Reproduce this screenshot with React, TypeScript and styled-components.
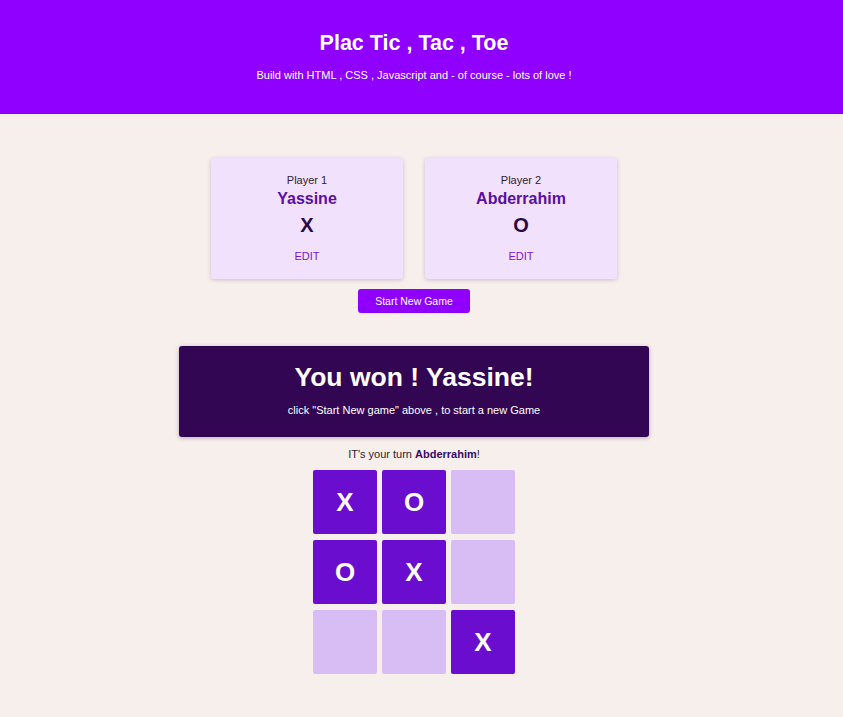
import styled, { createGlobalStyle } from 'styled-components';

type Player = { label: string, name: string, symbol: string }

const GlobalStyle = createGlobalStyle`
  body {
    margin: 0;
    background: #f7efec;
    font-family: "Liberation Sans", Arial, sans-serif;
  }
`

const Header = styled.header`
  background: #8f00ff;
  color: #fff;
  text-align: center;
  padding: 30px 15px 32px 0;
`

const Title = styled.h1`
  margin: 0;
  font-size: 21.5px;
  line-height: 26px;
  font-weight: bold;
`

const Subtitle = styled.p`
  margin: 13px 0 0;
  font-size: 11px;
  line-height: 13px;
  font-weight: normal;
`

const Main = styled.main`
  display: flex;
  flex-direction: column;
  align-items: center;
  padding: 44px 15px 40px 0;
`

const Players = styled.ol`
  list-style: none;
  margin: 0;
  padding: 0;
  display: flex;
  gap: 22px;
`

const Card = styled.li`
  width: 192px;
  box-sizing: border-box;
  padding: 16px 0 16px;
  background: #f2e1fd;
  border-radius: 3px;
  box-shadow: 0 1px 4px rgba(60, 20, 90, 0.22);
  text-align: center;
  display: flex;
  flex-direction: column;
  align-items: center;
`

const Label = styled.span`
  font-size: 11px;
  line-height: 13px;
  color: #2c2233;
`

const Name = styled.span`
  font-size: 16px;
  line-height: 20px;
  font-weight: bold;
  color: #5a0ea6;
  margin-top: 2px;
`

const Symbol = styled.span`
  font-size: 20px;
  line-height: 24px;
  font-weight: bold;
  color: #2a0846;
  margin-top: 4px;
`

const Edit = styled.button`
  margin-top: 13px;
  border: none;
  background: none;
  padding: 0;
  font-family: inherit;
  font-size: 11px;
  line-height: 13px;
  color: #7b14d6;
  cursor: pointer;
`

const StartButton = styled.button`
  margin-top: 10px;
  width: 112px;
  height: 24px;
  border: none;
  border-radius: 3px;
  background: #8f00ff;
  color: #fff;
  font-family: inherit;
  font-size: 10.5px;
  cursor: pointer;
`

const WinBox = styled.section`
  margin-top: 33px;
  width: 470px;
  box-sizing: border-box;
  padding: 15px 0 20px;
  background: #330654;
  border-radius: 3px;
  box-shadow: 0 1px 4px rgba(40, 10, 60, 0.3);
  color: #fff;
  text-align: center;
`

const WinTitle = styled.h2`
  margin: 0;
  font-size: 26.5px;
  line-height: 32px;
  font-weight: bold;
`

const WinText = styled.p`
  margin: 11px 0 0;
  font-size: 11px;
  line-height: 13px;
  font-weight: normal;
`

const Turn = styled.p`
  margin: 11px 0 0;
  font-size: 11px;
  line-height: 13px;
  color: #2c2233;

  strong {
    color: #3a0a66;
  }
`

const Board = styled.ol`
  list-style: none;
  margin: 9px 0 0;
  padding: 0;
  display: grid;
  grid-template-columns: repeat(3, 64px);
  grid-auto-rows: 64px;
  gap: 6px 5px;
`

const Cell = styled.li<{ $filled: boolean }>`
  display: flex;
  align-items: center;
  justify-content: center;
  border-radius: 2px;
  background: ${p => p.$filled ? '#6a0dcf' : '#d8bdf5'};
  color: #fff;
  font-size: 26px;
  font-weight: bold;
`

function App() {
  let players: Player[] = [
    { label: 'Player 1', name: 'Yassine', symbol: 'X' },
    { label: 'Player 2', name: 'Abderrahim', symbol: 'O' },
  ]

  let board = ['X', 'O', '', 'O', 'X', '', '', '', 'X']

  return (
    <>
      <GlobalStyle />
      <Header>
        <Title>Plac Tic , Tac , Toe</Title>
        <Subtitle>Build with HTML , CSS , Javascript and - of course - lots of love !</Subtitle>
      </Header>
      <Main>
        <Players>
          {players.map((p, i) => (
            <Card key={i}>
              <Label>{p.label}</Label>
              <Name>{p.name}</Name>
              <Symbol>{p.symbol}</Symbol>
              <Edit>EDIT</Edit>
            </Card>
          ))}
        </Players>
        <StartButton>Start New Game</StartButton>
        <WinBox>
          <WinTitle>You won ! Yassine!</WinTitle>
          <WinText>click "Start New game" above , to start a new Game</WinText>
        </WinBox>
        <Turn>IT's your turn <strong>Abderrahim</strong>!</Turn>
        <Board>
          {board.map((s, i) => (
            <Cell key={i} $filled={s !== ''}>{s}</Cell>
          ))}
        </Board>
      </Main>
    </>
  )
}

export default App
